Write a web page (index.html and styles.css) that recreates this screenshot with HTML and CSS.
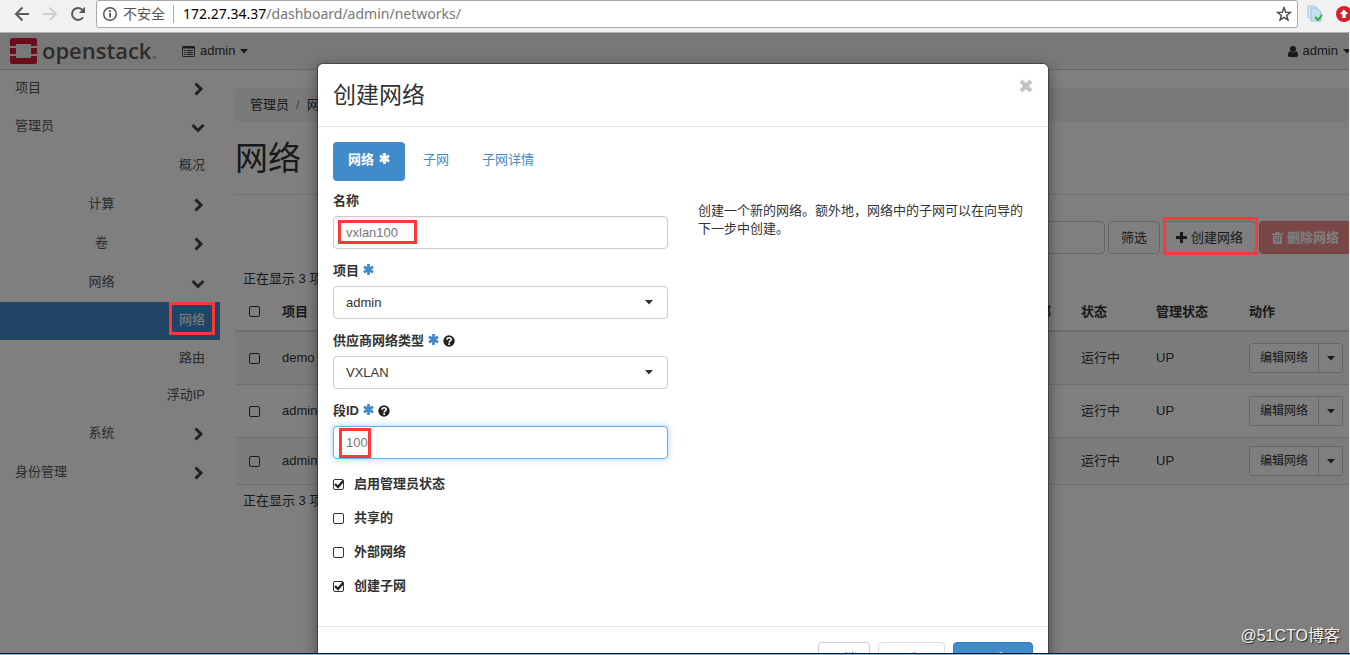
FILE: index.html
```html
<!DOCTYPE html>
<html lang="zh-CN">
<head>
<meta charset="utf-8">
<title>网络 - OpenStack Dashboard</title>
<link rel="stylesheet" href="styles.css">
</head>
<body>
<header class="browser">
  <button class="nav-btn" aria-label="后退"><svg width="16" height="16" viewBox="0 0 16 16" fill="none" stroke="#5a5a5a" stroke-width="2"><path d="M15 8H2M8.500 1.500L2 8l6.500 6.500"/></svg></button>
  <button class="nav-btn" aria-label="前进" disabled><svg width="16" height="16" viewBox="0 0 16 16" fill="none" stroke="#d0d0d0" stroke-width="2"><path d="M1 8h13M7.500 1.500L14 8l-6.500 6.500"/></svg></button>
  <button class="nav-btn" aria-label="刷新"><svg width="16" height="16" viewBox="0 0 16 16"><path d="M13 11.300A6 6 0 1 1 12.600 4" fill="none" stroke="#5a5a5a" stroke-width="2"/><path d="M15 .8V7H8.800z" fill="#5a5a5a"/></svg></button>
  <div class="address">
    <svg width="16" height="16" viewBox="0 0 16 16"><circle cx="8" cy="8" r="6.300" fill="none" stroke="#555" stroke-width="1.500"/><path d="M7.200 7h1.700v4.500H7.200zM7.200 4.200h1.700v1.700H7.200z" fill="#444"/></svg>
    <span class="insecure">不安全</span>
    <span class="url"><b>172.27.34.37</b>/dashboard/admin/networks/</span>
    <button class="star" aria-label="收藏"><svg width="16" height="16" viewBox="0 0 16 16" fill="none" stroke="#4a4a4a" stroke-width="1.400"><path d="M8 1.600l1.700 4.600 4.800.2-3.800 3 1.300 4.700L8 11.400l-4 2.700 1.300-4.700-3.800-3 4.800-.2z"/></svg></button>
  </div>
  <button class="ext" aria-label="文档扩展"><svg width="18" height="18" viewBox="0 0 18 18"><path d="M2 1h7l2 2v10H2z" fill="#d7e8f6" stroke="#a3c4e0"/><path d="M5 3h6l4 4v9H5z" fill="#c6def3" stroke="#9fc0dc"/><path d="M9 12l3 3 4-5" fill="none" stroke="#25b336" stroke-width="2"/></svg></button>
  <button class="ext last" aria-label="更新"><svg width="16" height="16" viewBox="0 0 16 16"><circle cx="8" cy="8" r="8" fill="#d22128"/><path d="M8 3.500L3.800 8h2.500v4h3.400V8h2.500z" fill="#fff"/></svg></button>
</header>

<div class="viewport">
  <div class="app">
    <nav class="navbar">
      <a class="brand" href="#">
        <svg width="27" height="26" viewBox="0 0 27 26" fill="#da1a32"><path d="M2 0h23a2 2 0 0 1 2 2v6h-6V6H6v2H0V2a2 2 0 0 1 2-2zM0 10h6v6H0zM21 10h6v6h-6zM0 18h6v2h15v-2h6v6a2 2 0 0 1-2 2H2a2 2 0 0 1-2-2z"/></svg>
        <span>openstack<i>.</i></span>
      </a>
      <button class="menu">
        <svg width="13" height="11" viewBox="0 0 13 11"><path d="M1 .5h11a.5.5 0 0 1 .5.5v9a.5.5 0 0 1-.5.5H1A.5.500 0 0 1 .5 10V1A.5.500 0 0 1 1 .5z" fill="none" stroke="#444"/><path d="M1 1h11v1.500H1zM2 4h1.500v1H2zM4.500 4H11v1H4.500zM2 6h1.500v1H2zM4.500 6H11v1H4.500zM2 8h1.500v1H2zM4.500 8H11v1H4.500z" fill="#333"/></svg>
        admin
        <svg width="8" height="5" viewBox="0 0 8 5" fill="#333"><path d="M0 0h8L4 4.500z"/></svg>
      </button>
      <button class="menu user">
        <svg width="10" height="11" viewBox="0 0 10 11" fill="#333"><circle cx="5" cy="3" r="3"/><path d="M2 5.200a4 4 0 0 0 6 0c1.500.5 2 2 2 4 0 1-.6 1.800-1.600 1.800H1.600C.6 11 0 10.200 0 9.200c0-2 .5-3.500 2-4z"/></svg>
        admin
        <svg width="8" height="5" viewBox="0 0 8 5" fill="#333"><path d="M0 0h8L4 4.500z"/></svg>
      </button>
    </nav>

    <div class="main">
      <aside class="sidebar">
        <a class="item" href="#"><span>项目</span><svg class="chev" viewBox="0 0 14 14"><path d="M4.500 1.500L10 7l-5.500 5.500"/></svg></a>
        <a class="item" href="#"><span>管理员</span><svg class="chev" viewBox="0 0 14 14"><path d="M1.500 5L7 10.500 12.500 5"/></svg></a>
        <a class="item leaf" href="#"><span>概况</span></a>
        <a class="item group" href="#"><span>计算</span><svg class="chev" viewBox="0 0 14 14"><path d="M4.500 1.500L10 7l-5.500 5.500"/></svg></a>
        <a class="item group" href="#"><span>卷</span><svg class="chev" viewBox="0 0 14 14"><path d="M4.500 1.500L10 7l-5.500 5.500"/></svg></a>
        <a class="item group" href="#"><span>网络</span><svg class="chev" viewBox="0 0 14 14"><path d="M1.500 5L7 10.500 12.500 5"/></svg></a>
        <a class="item leaf active" href="#"><span>网络</span><i class="mark mark-side"></i></a>
        <a class="item leaf short" href="#"><span>路由</span></a>
        <a class="item leaf short" href="#"><span>浮动IP</span></a>
        <a class="item group" href="#"><span>系统</span><svg class="chev" viewBox="0 0 14 14"><path d="M4.500 1.500L10 7l-5.500 5.500"/></svg></a>
        <a class="item" href="#"><span>身份管理</span><svg class="chev" viewBox="0 0 14 14"><path d="M4.500 1.500L10 7l-5.500 5.500"/></svg></a>
      </aside>

      <main class="content">
        <div class="breadcrumb"><a href="#">管理员</a><span>/</span><a href="#">网络</a></div>
        <h1>网络</h1>
        <div class="toolbar">
          <input class="filter" type="text" aria-label="筛选条件">
          <button class="btn">筛选</button>
          <button class="btn create"><svg width="11" height="11" viewBox="0 0 11 11" fill="#333"><path d="M4 0h3v4h4v3H7v4H4V7H0V4h4z"/></svg>创建网络<i class="mark mark-create"></i></button>
          <button class="btn danger"><svg width="11" height="12" viewBox="0 0 11 12"><path d="M4 0h3l.7 1.500H11V3H0V1.500h3.300zM1 3.800h9V11a1 1 0 0 1-1 1H2a1 1 0 0 1-1-1z" fill="#fff"/><path d="M3.500 5v5M5.500 5v5M7.500 5v5" stroke="#f0a5a2"/></svg>删除网络</button>
        </div>
        <p class="count">正在显示 3 项</p>
        <table>
          <colgroup><col class="c-check"><col><col class="c-ext"><col class="c-state"><col class="c-admin"><col class="c-act"></colgroup>
          <thead><tr><th><input type="checkbox" aria-label="全选"></th><th>项目</th><th>外部</th><th>状态</th><th>管理状态</th><th>动作</th></tr></thead>
          <tbody>
            <tr><td><input type="checkbox" aria-label="选择 demo"></td><td>demo</td><td></td><td>运行中</td><td>UP</td><td><div class="split"><button>编辑网络</button><button aria-label="更多"><svg width="8" height="5" viewBox="0 0 8 5" fill="#333"><path d="M0 0h8L4 4.500z"/></svg></button></div></td></tr>
            <tr><td><input type="checkbox" aria-label="选择 admin"></td><td>admin</td><td></td><td>运行中</td><td>UP</td><td><div class="split"><button>编辑网络</button><button aria-label="更多"><svg width="8" height="5" viewBox="0 0 8 5" fill="#333"><path d="M0 0h8L4 4.500z"/></svg></button></div></td></tr>
            <tr class="tight"><td><input type="checkbox" aria-label="选择 admin"></td><td>admin</td><td></td><td>运行中</td><td>UP</td><td><div class="split"><button>编辑网络</button><button aria-label="更多"><svg width="8" height="5" viewBox="0 0 8 5" fill="#333"><path d="M0 0h8L4 4.500z"/></svg></button></div></td></tr>
          </tbody>
        </table>
        <p class="count">正在显示 3 项</p>
      </main>
    </div>
    <div class="backdrop"></div>
  </div>

  <div class="modal" role="dialog" aria-labelledby="title">
    <div class="modal-head">
      <h2 id="title">创建网络</h2>
      <button class="close" aria-label="关闭"><svg width="14" height="14" viewBox="0 0 14 14" stroke="#c4c4c4" stroke-width="4"><path d="M2 2l10 10M12 2L2 12"/></svg></button>
    </div>
    <div class="modal-body">
      <div class="tabs">
        <a class="tab current" href="#">网络 <svg class="ast" viewBox="0 0 12 12"><path d="M6 0v12M1 3l10 6M11 3L1 9"/></svg></a>
        <a class="tab" href="#">子网</a>
        <a class="tab" href="#">子网详情</a>
      </div>
      <div class="cols">
        <form class="form">
          <div class="field">
            <label for="name">名称</label>
            <div class="control"><input id="name" type="text" value="vxlan100"><i class="mark mark-name"></i></div>
          </div>
          <div class="field">
            <label for="project">项目 <svg class="ast" viewBox="0 0 12 12"><path d="M6 0v12M1 3l10 6M11 3L1 9"/></svg></label>
            <div class="control"><select id="project"><option>admin</option></select><svg class="caret" viewBox="0 0 8 5"><path d="M0 0h8L4 4.500z"/></svg></div>
          </div>
          <div class="field">
            <label for="type">供应商网络类型 <svg class="ast" viewBox="0 0 12 12"><path d="M6 0v12M1 3l10 6M11 3L1 9"/></svg> <svg class="help" viewBox="0 0 12 12"><circle cx="6" cy="6" r="5.700" fill="#222"/><path d="M4 4.700c0-2.700 4.200-2.500 4.200-.2C8.200 6 6.200 5.900 6.200 7.400" fill="none" stroke="#fff" stroke-width="1.600"/><path d="M5.300 8.300H7V10H5.300z" fill="#fff"/></svg></label>
            <div class="control"><select id="type"><option>VXLAN</option></select><svg class="caret" viewBox="0 0 8 5"><path d="M0 0h8L4 4.500z"/></svg></div>
          </div>
          <div class="field">
            <label for="seg">段ID <svg class="ast" viewBox="0 0 12 12"><path d="M6 0v12M1 3l10 6M11 3L1 9"/></svg> <svg class="help" viewBox="0 0 12 12"><circle cx="6" cy="6" r="5.700" fill="#222"/><path d="M4 4.700c0-2.700 4.200-2.500 4.200-.2C8.200 6 6.200 5.900 6.200 7.400" fill="none" stroke="#fff" stroke-width="1.600"/><path d="M5.300 8.300H7V10H5.300z" fill="#fff"/></svg></label>
            <div class="control"><input id="seg" class="focused" type="text" value="100"><i class="mark mark-seg"></i></div>
          </div>
          <label class="check"><input type="checkbox" checked>启用管理员状态</label>
          <label class="check"><input type="checkbox">共享的</label>
          <label class="check"><input type="checkbox">外部网络</label>
          <label class="check"><input type="checkbox" checked>创建子网</label>
        </form>
        <p class="help-text">创建一个新的网络。额外地，网络中的子网可以在向导的下一步中创建。</p>
      </div>
    </div>
    <div class="modal-foot">
      <button class="btn">取消</button>
      <button class="btn back" disabled>« 返回</button>
      <button class="btn primary">下一步 »</button>
    </div>
  </div>
  <div class="watermark">@51CTO博客</div>
</div>
<footer class="taskbar"></footer>
</body>
</html>
```
FILE: styles.css
```css
* { box-sizing: border-box; }
body {
  margin: 0;
  height: 100vh;
  display: flex;
  flex-direction: column;
  overflow: hidden;
  background: #f1f1f1;
  color: #333;
  font: 13px/18px "Liberation Sans", "Noto Sans CJK SC", sans-serif;
}
button, input, select { font: inherit; color: inherit; }
button { cursor: pointer; }
a { color: inherit; text-decoration: none; }
h1, h2, p { margin: 0; font-weight: 400; }
svg { flex: none; }

/* Browser chrome */
.browser {
  flex: none;
  display: flex;
  align-items: flex-start;
  height: 33px;
  padding-left: 14px;
  background: #f1f1f1;
  border-bottom: 1px solid #b2b2b2;
  overflow: hidden;
}
.browser button { display: flex; align-items: center; height: 28px; padding: 0; border: 0; background: none; }
.nav-btn { width: 28px; }
.address {
  flex: 1;
  display: flex;
  align-items: center;
  height: 28px;
  margin-right: 8px;
  padding: 0 5px;
  background: #fff;
  border: 1px solid #a8a8a8;
  border-radius: 3px;
}
.browser .nav-btn:nth-child(3) { width: 26px; }
.insecure { padding: 0 8px 0 5px; font-size: 14px; color: #555; }
.url {
  flex: 1;
  padding-left: 9px;
  border-left: 1px solid #aaa;
  font: 14px/18px "Noto Sans", sans-serif;
  color: #777;
}
.url b { font-weight: 400; color: #000; }
.ext { flex: none; width: 30px; }
.browser .last { width: 14px; }

/* Page */
.viewport { flex: 1; min-height: 0; position: relative; overflow: hidden; }
.app { height: 100%; margin-right: 1px; position: relative; background: #fff; overflow: hidden; }
.backdrop { position: absolute; inset: 0; z-index: 10; background: rgba(0, 0, 0, .5); }
.navbar {
  display: flex;
  align-items: center;
  height: 37px;
  padding-left: 10px;
  background: #f0f0f0;
  border-bottom: 1px solid #cfcfcf;
}
.brand { display: flex; align-items: center; gap: 5px; width: 172px; }
.brand span { padding-bottom: 3px; font: 600 22px/30px "Open Sans", sans-serif; color: #5c5656; }
.brand i { color: #aaa; font-style: normal; }
.menu { display: flex; align-items: center; gap: 5px; padding: 0; border: 0; background: none; }
.user { margin-left: auto; margin-right: -2px; }

.main { display: flex; }
.sidebar { flex: none; width: 220px; }
.item { display: flex; align-items: center; height: 39px; padding: 0 15px; color: #555; }
.item:first-child { height: 37px; }
.item span { flex: 1; padding-bottom: 2px; }
.group span { text-align: center; }
.leaf span { text-align: right; }
.active { position: relative; height: 38px; background: #428bca; color: #fff; }
.short { height: 37px; }
.chev { width: 14px; height: 14px; margin-left: 3px; fill: none; stroke: #444; stroke-width: 3; }

.mark { position: absolute; z-index: 20; border: 3px solid #fd3838; }
.mark-side { right: 5px; top: 0; width: 46px; height: 33px; }
.mark-create { inset: -5px -3px -2px -1px; }
.mark-name { left: 5px; top: 4px; width: 79px; height: 24px; }
.mark-seg { left: 6px; top: 2px; width: 32px; height: 30px; }

.content { flex: 1; min-width: 0; padding: 18px 0 0 15px; }
.breadcrumb {
  display: flex;
  gap: 7px;
  padding: 8px 15px;
  background: #f5f5f5;
  border-radius: 4px;
}
.breadcrumb span { color: #888; }
h1 { padding: 17px 0 15px; border-bottom: 1px solid #e2e2e2; font-size: 33px; line-height: 40px; }
.toolbar { display: flex; gap: 3px; justify-content: flex-end; margin: 26px -2px 15px 0; }
.filter { width: 240px; height: 33px; border: 1px solid #ccc; border-radius: 4px; background: #fff; }
.btn {
  display: flex;
  align-items: center;
  gap: 4px;
  height: 33px;
  padding: 0 12px;
  border: 1px solid #ccc;
  border-radius: 4px;
  background: #fff;
}
.create { position: relative; }
.toolbar .danger { padding: 0 11px 0 12px; background: #f08f8c; border-color: #e88985; color: #fff; font-weight: 700; }
.count { padding: 0 8px; line-height: 20px; }
table { width: 100%; table-layout: fixed; border-collapse: collapse; margin-bottom: 6px; }
.c-check { width: 39px; }
.c-ext { width: 56px; }
.c-state { width: 75px; }
.c-admin { width: 93px; }
.c-act { width: 108px; }
th { height: 42px; padding: 4px 8px 0; text-align: left; border-bottom: 2px solid #ddd; }
td { padding: 11px 8px; border-bottom: 1px solid #ddd; }
.tight td { padding: 8px 8px; }
tbody tr:nth-child(odd) { background: #f9f9f9; }
th:first-child, td:first-child { padding-left: 14px; }
.split { display: flex; width: 94px; height: 30px; }
.split button {
  display: flex;
  align-items: center;
  justify-content: center;
  width: 70px;
  padding: 0;
  border: 1px solid #ccc;
  border-radius: 3px 0 0 3px;
  background: #fff;
  font-size: 12px;
}
.split button + button { width: 25px; margin-left: -1px; border-radius: 0 3px 3px 0; }

input[type="checkbox"] {
  appearance: none;
  display: block;
  width: 11px;
  height: 11px;
  margin: 0;
  border: 1px solid #333;
  border-radius: 2px;
}

/* Dialog */
.modal {
  position: absolute;
  z-index: 30;
  top: 31px;
  left: 318px;
  right: 302px;
  background: #fff;
  border-radius: 5px;
  box-shadow: 0 0 0 1px rgba(0, 0, 0, .3), 0 4px 14px rgba(0, 0, 0, .5);
}
.modal-head {
  display: flex;
  justify-content: space-between;
  align-items: flex-start;
  padding: 15px;
  border-bottom: 1px solid #e5e5e5;
}
.modal-head h2 { font-size: 23px; line-height: 32px; }
.close { display: flex; padding: 0; border: 0; background: none; }
.modal-body { padding: 15px; }
.tabs { display: flex; gap: 3px; }
.tab { display: flex; align-items: center; gap: 5px; height: 39px; padding: 0 15px 3px; border-radius: 4px; color: #428bca; }
.current { background: #428bca; color: #fff; font-weight: 700; }
.ast { width: 11px; height: 11px; margin-bottom: 3px; fill: none; stroke: #428bca; stroke-width: 3; }
.current .ast { stroke: #fff; margin-bottom: 4px; }
.cols { display: grid; grid-template-columns: 1fr 1fr; gap: 30px; margin-top: 10px; }
.field { margin-bottom: 12px; }
.field:last-of-type { margin-bottom: 8px; }
.field label { display: flex; align-items: center; gap: 4px; height: 20px; margin-bottom: 5px; font-weight: 700; }
.help { width: 12px; height: 12px; }
.control { position: relative; }
.control input, .control select {
  appearance: none;
  display: block;
  width: 100%;
  height: 33px;
  padding: 0 12px;
  border: 1px solid #ccc;
  border-radius: 4px;
  background: #fff;
  outline: 0;
}
.control input { color: #777; box-shadow: inset 0 1px 1px rgba(0, 0, 0, .08); }
.control .focused { border-color: #66afe9; box-shadow: 0 0 7px rgba(102, 175, 233, .6); }
.caret { position: absolute; right: 15px; top: 14px; width: 8px; height: 5px; fill: #333; }
.check { display: flex; align-items: center; gap: 10px; height: 34px; font-weight: 700; }
.check input { border-color: #333; }
.check input:checked {
  background: url("data:image/svg+xml,%3Csvg xmlns='http://www.w3.org/2000/svg' viewBox='0 0 11 11'%3E%3Cpath d='M2 5l3 3 6-7' fill='none' stroke='%23222' stroke-width='2.4'/%3E%3C/svg%3E") -1px -1px / 11px 11px no-repeat;
}
.help-text { padding-top: 11px; }
.modal-foot {
  display: flex;
  justify-content: flex-end;
  gap: 8px;
  margin-top: 8px;
  padding: 15px;
  border-top: 1px solid #e5e5e5;
}
.modal-foot .back { padding: 0 14px; opacity: .65; }
.modal-foot .primary { padding: 0 14px; background: #428bca; border-color: #357ebd; color: #fff; font-weight: 700; }

.watermark {
  position: absolute;
  z-index: 40;
  right: 10px;
  bottom: 7px;
  color: #f2f2f2;
  font-size: 16px;
  line-height: 20px;
  text-shadow: 1px 1px 1px #222;
}
.taskbar { flex: none; height: 2px; border-top: 1px solid #0d1c2c; background: #86b4d6; }
```
